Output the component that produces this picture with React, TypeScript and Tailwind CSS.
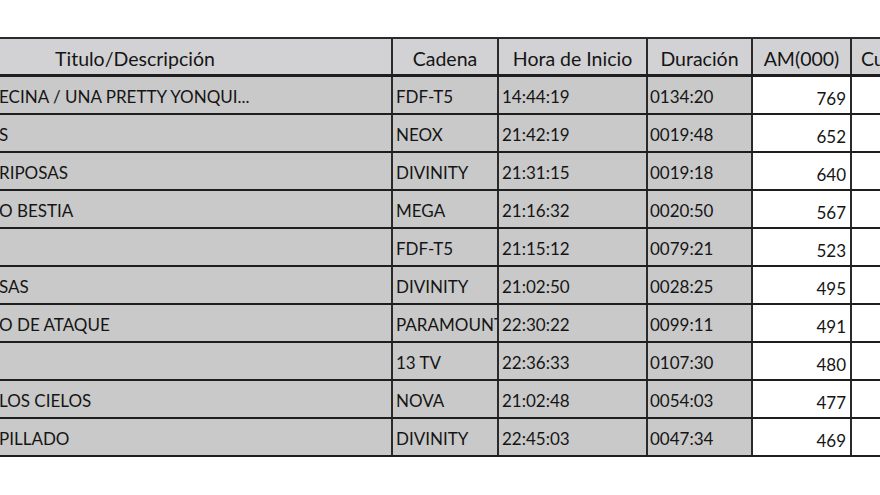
const columns = [
  { key: 'titulo', label: 'Titulo/Descripción', width: 'w-[393px]', align: 'justify-start pl-[55px]' },
  { key: 'cadena', label: 'Cadena', width: 'w-[106px]', align: 'justify-center' },
  { key: 'hora', label: 'Hora de Inicio', width: 'w-[149px]', align: 'justify-center' },
  { key: 'duracion', label: 'Duración', width: 'w-[105px]', align: 'justify-center' },
  { key: 'am', label: 'AM(000)', width: 'w-[99px]', align: 'justify-center' },
  { key: 'cuota', label: 'Cuota', width: 'w-[90px]', align: 'justify-start pl-[9px]' },
];

const rows = [
  { titulo: 'ECINA / UNA PRETTY YONQUI...', cadena: 'FDF-T5', hora: '14:44:19', duracion: '0134:20', am: '769' },
  { titulo: 'S', cadena: 'NEOX', hora: '21:42:19', duracion: '0019:48', am: '652' },
  { titulo: 'RIPOSAS', cadena: 'DIVINITY', hora: '21:31:15', duracion: '0019:18', am: '640' },
  { titulo: 'O BESTIA', cadena: 'MEGA', hora: '21:16:32', duracion: '0020:50', am: '567' },
  { titulo: '', cadena: 'FDF-T5', hora: '21:15:12', duracion: '0079:21', am: '523' },
  { titulo: 'SAS', cadena: 'DIVINITY', hora: '21:02:50', duracion: '0028:25', am: '495' },
  { titulo: 'O DE ATAQUE', cadena: 'PARAMOUNT', hora: '22:30:22', duracion: '0099:11', am: '491' },
  { titulo: '', cadena: '13 TV', hora: '22:36:33', duracion: '0107:30', am: '480' },
  { titulo: 'LOS CIELOS', cadena: 'NOVA', hora: '21:02:48', duracion: '0054:03', am: '477' },
  { titulo: 'PILLADO', cadena: 'DIVINITY', hora: '22:45:03', duracion: '0047:34', am: '469' },
];

export default function App() {
  return (
    <div
      className="w-[880px] h-[495px] overflow-hidden bg-white text-[#151515]"
      style={{ fontFamily: 'Lato, "Open Sans", sans-serif' }}
    >
      <div className="mt-[37px] w-[942px] border-t-2 border-[#2a2a2a]">
        {/* header row */}
        <div className="flex h-[38px] border-b-[3px] border-[#1e1e1e] bg-[#d2d2d4]">
          {columns.map((col, i) => (
            <div
              key={col.key}
              className={`${col.width} ${col.align} shrink-0 flex items-center pt-[5px] text-[19.5px] whitespace-nowrap ${
                i < columns.length - 1 ? 'border-r-2 border-[#2a2a2a]' : ''
              }`}
            >
              {col.label}
            </div>
          ))}
        </div>

        {rows.map((row, r) => (
          <div key={r} className="flex h-[38px] border-b-2 border-[#1e1e1e]">
            <div className="w-[393px] shrink-0 border-r-2 border-[#2a2a2a] bg-[#c9c9c9] flex items-end pb-[4px] text-[17px] whitespace-nowrap overflow-hidden">
              <span className="-ml-[1px]">{row.titulo}</span>
            </div>
            <div className="w-[106px] shrink-0 border-r-2 border-[#2a2a2a] bg-[#c9c9c9] flex items-end pb-[4px] pl-[3px] text-[17px] whitespace-nowrap overflow-hidden">
              {row.cadena}
            </div>
            <div className="w-[149px] shrink-0 border-r-2 border-[#2a2a2a] bg-[#c9c9c9] flex items-end pb-[4px] pl-[3px] text-[17px]">
              {row.hora}
            </div>
            <div className="w-[105px] shrink-0 border-r-2 border-[#2a2a2a] bg-[#c9c9c9] flex items-end pb-[4px] pl-[2px] text-[17px]">
              {row.duracion}
            </div>
            <div className="w-[99px] shrink-0 border-r-2 border-[#2a2a2a] bg-white flex items-end justify-end pb-[2px] pr-[4px] text-[17px]">
              {row.am}
            </div>
            <div className="w-[90px] shrink-0 bg-white" />
          </div>
        ))}
      </div>
    </div>
  );
}
